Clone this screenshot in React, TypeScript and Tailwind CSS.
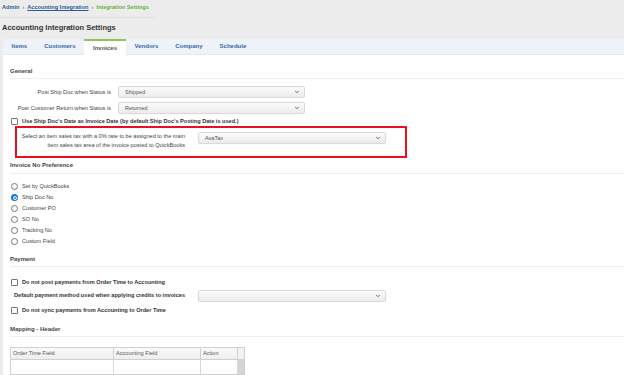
import { ChevronDown } from "lucide-react";

const font = "font-['Liberation_Sans',Arial,sans-serif]";

function Select({ value, className }: { value?: string; className: string }) {
  return (
    <div
      className={`flex items-center justify-between h-[12px] border border-[#d9d9d9] rounded-[2px] bg-gradient-to-b from-[#fbfbfb] to-[#ececec] pl-[6px] pr-[4px] text-[5.5px] text-[#555] shrink-0 ${className}`}
    >
      <span>{value}</span>
      <ChevronDown className="w-[6px] h-[6px] text-[#555]" strokeWidth={3.5} />
    </div>
  );
}

function Checkbox() {
  return (
    <span className="w-[7px] h-[7px] border border-[#767676] rounded-[1px] bg-white shrink-0" />
  );
}

function Radio({ checked }: { checked?: boolean }) {
  return checked ? (
    <span className="w-[7px] h-[7px] rounded-full bg-[#1a73e8] flex items-center justify-center shrink-0">
      <span className="w-[4px] h-[4px] rounded-full bg-[#1a73e8] border border-white" />
    </span>
  ) : (
    <span className="w-[7px] h-[7px] rounded-full border border-[#767676] bg-white shrink-0" />
  );
}

function SectionHeader({ title, className }: { title: string; className: string }) {
  return (
    <div className={`border-b border-[#f0f0f0] ${className}`}>
      <div className="h-[8px] flex items-center text-[6px] font-bold text-[#444]">
        {title}
      </div>
    </div>
  );
}

export default function App() {
  const tabs = ["Items", "Customers", "Invoices", "Vendors", "Company", "Schedule"];
  const radios = [
    "Set by QuickBooks",
    "Ship Doc No",
    "Customer PO",
    "SO No",
    "Tracking No",
    "Custom Field",
  ];

  return (
    <div className={`w-[624px] h-[375px] overflow-hidden bg-[#ececec] ${font}`}>
      <div className="h-[14px] flex items-center pl-[2px] text-[5.6px] font-bold gap-[3px]">
        <span className="text-[#2b5c9c]">Admin</span>
        <span className="text-[#888]">›</span>
        <span className="text-[#2b5c9c] underline">Accounting Integration</span>
        <span className="text-[#888]">›</span>
        <span className="text-[#6aae3c]">Integration Settings</span>
      </div>
      <div className="mt-[3px] h-px w-[155px] bg-[#e0e0e0]" />
      <div className="h-[21px] flex items-center pb-[2px] pl-[2px] text-[7.5px] font-bold text-[#333]">
        Accounting Integration Settings
      </div>

      <div className="ml-[3px] h-[16px] flex bg-[#eef3f9] border-b border-[#e3e9f1]">
        {tabs.map((tab) =>
          tab === "Invoices" ? (
            <div
              key={tab}
              className="px-[9px] flex items-center bg-white border-t-2 border-[#8cc35c] text-[6px] font-bold text-[#555] -mb-px"
            >
              {tab}
            </div>
          ) : (
            <div key={tab} className="px-[8.5px] flex items-center text-[6px] font-bold text-[#3867a8]">
              {tab}
            </div>
          )
        )}
      </div>

      <div className="ml-[3px] h-[320px] bg-white pl-[7px] text-[5.6px] text-[#444] whitespace-nowrap">
        <SectionHeader title="General" className="pt-[12px] pb-[3px]" />

        <div className="mt-[7px] flex items-center h-[12px]">
          <div className="w-[101px] text-right">Post Ship Doc when Status is</div>
          <Select value="Shipped" className="ml-[7px] w-[187px]" />
        </div>
        <div className="mt-[4px] flex items-center h-[12px]">
          <div className="w-[101px] text-right">Post Customer Return when Status is</div>
          <Select value="Returned" className="ml-[7px] w-[187px]" />
        </div>

        <div className="mt-[3px] h-[9px] flex items-center gap-[4px] pl-px">
          <Checkbox />
          <span className="font-bold text-[#333]">
            Use Ship Doc's Date as Invoice Date (by default Ship Doc's Posting Date is used.)
          </span>
        </div>

        <div className="ml-[5px] w-[392px] border-2 border-[#e8101c] flex items-start pt-[4px] pb-[6px]">
          <div className="w-[168px] text-right leading-[9px]">
            Select an item sales tax with a 0% rate to be assigned to the main
            <br />
            item sales tax area of the invoice posted to QuickBooks
          </div>
          <Select value="AvaTax" className="ml-[13px] w-[188px]" />
        </div>

        <SectionHeader title="Invoice No Preference" className="mt-[3px] pb-[4px]" />

        <div className="mt-[7px] flex flex-col pl-px">
          {radios.map((r) => (
            <div key={r} className="h-[11px] flex items-center gap-[4px]">
              <Radio checked={r === "Ship Doc No"} />
              <span>{r}</span>
            </div>
          ))}
        </div>

        <SectionHeader title="Payment" className="mt-[8px] pb-[3px]" />

        <div className="mt-[10px] h-[10px] flex items-center gap-[4px] pl-px">
          <Checkbox />
          <span className="font-bold text-[#333]">Do not post payments from Order Time to Accounting</span>
        </div>
        <div className="mt-[3px] h-[11px] flex items-center">
          <div className="w-[175px] text-right font-bold text-[#333]">
            Default payment method used when applying credits to invoices
          </div>
          <Select className="ml-[13px] w-[188px]" />
        </div>
        <div className="mt-[4px] h-[10px] flex items-center gap-[4px] pl-px">
          <Checkbox />
          <span className="font-bold text-[#333]">Do not sync payments from Accounting to Order Time</span>
        </div>

        <SectionHeader title="Mapping - Header" className="mt-[10px] pb-[3px]" />

        <div className="mt-[10px] w-[235px] border border-[#d0d0d0] flex flex-col">
          <div className="h-[12px] flex bg-gradient-to-b from-[#fafafa] to-[#eeeeee] border-b border-[#d0d0d0] text-[#555]">
            <div className="w-[103px] border-r border-[#d0d0d0] flex items-center pl-[2px]">Order Time Field</div>
            <div className="w-[87px] border-r border-[#d0d0d0] flex items-center pl-[2px]">Accounting Field</div>
            <div className="w-[37px] border-r border-[#d0d0d0] flex items-center pl-[2px]">Action</div>
            <div className="flex-1 bg-[#f2f2f2]" />
          </div>
          <div className="h-[14px] flex">
            <div className="w-[103px] border-r border-[#d8d8d8]" />
            <div className="w-[87px] border-r border-[#d8d8d8]" />
            <div className="w-[37px] border-r border-[#d8d8d8]" />
            <div className="flex-1 bg-[#d4d4d4]" />
          </div>
        </div>
      </div>
    </div>
  );
}
